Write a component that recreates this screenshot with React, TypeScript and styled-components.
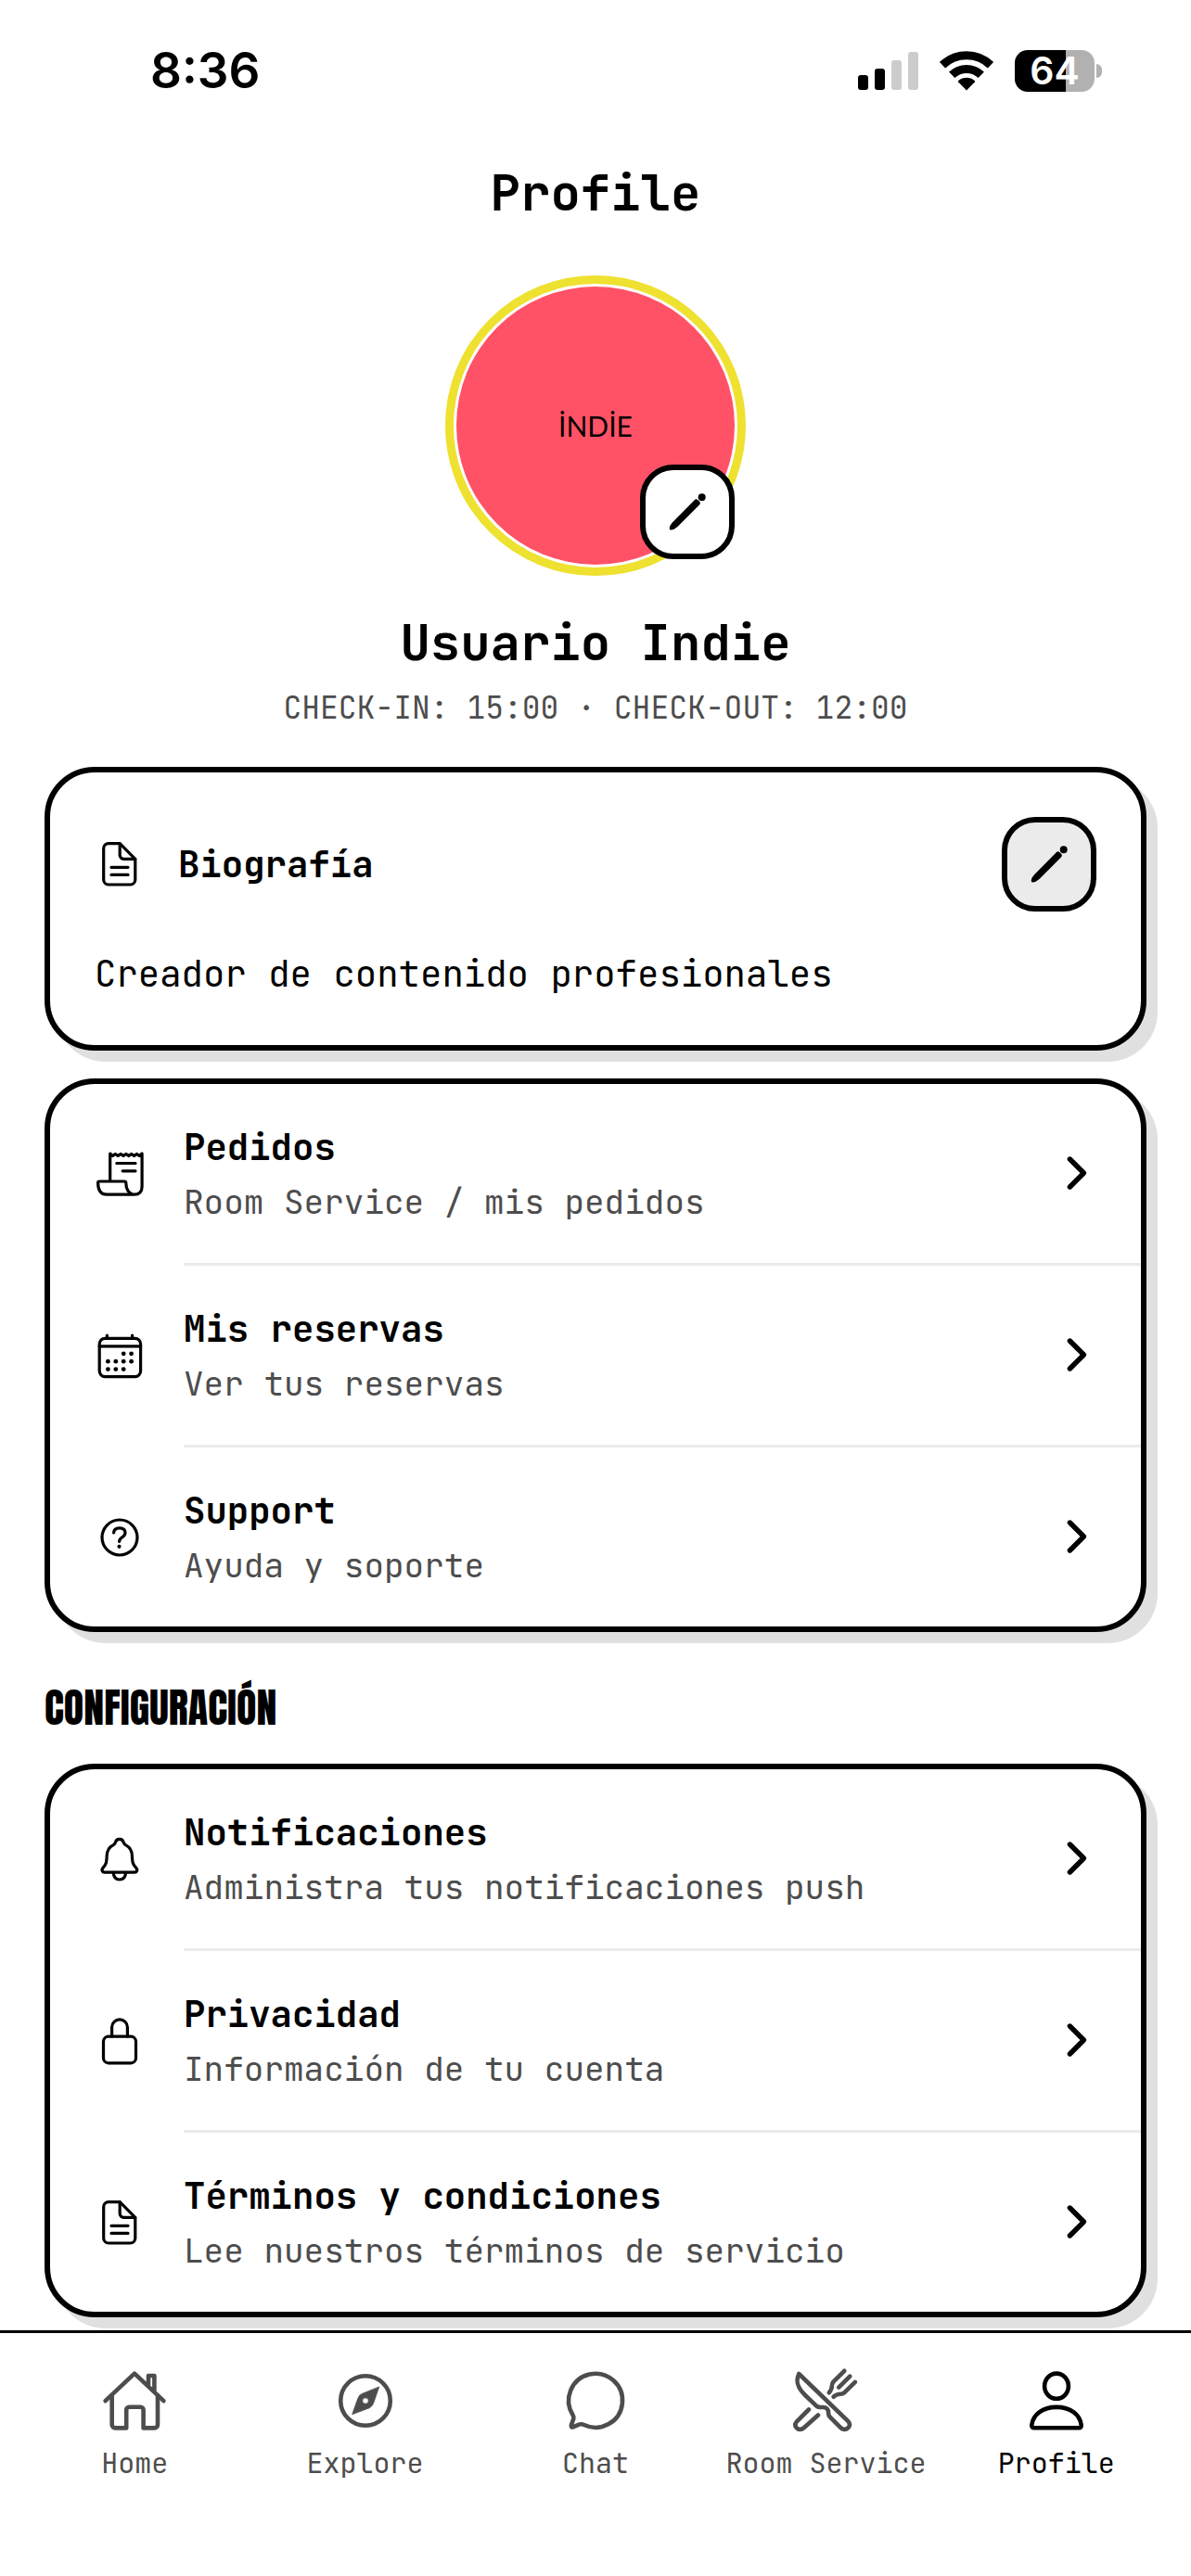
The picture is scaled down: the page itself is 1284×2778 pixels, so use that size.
import React, { useState } from 'react';
import styled, { createGlobalStyle } from 'styled-components';

const colors = {
  ink: '#000000',
  muted: '#4d4d4d',
  line: '#ebebeb',
  paper: '#ffffff',
  accent: '#ff5266',
  ring: '#eee130',
  shadow: '#e0e0e0',
  faded: '#cccccc',
  battery: '#b1b1b1',
};

const mono = "'JetBrains Mono', 'DejaVu Sans Mono', monospace";
const system = "'SF Pro Text', 'Inter', sans-serif";

const GlobalStyle = createGlobalStyle`
  *,
  *::before,
  *::after {
    box-sizing: border-box;
  }

  body {
    margin: 0;
    background-color: ${colors.paper};
    color: ${colors.ink};
    font-family: ${mono};
  }

  button {
    font-family: inherit;
    color: inherit;
    cursor: pointer;
  }
`;

const Screen = styled.div`
  display: flex;
  flex-flow: column;
  min-height: 100vh;
`;

const StatusBar = styled.div`
  display: flex;
  justify-content: space-between;
  align-items: center;
  height: 152px;
  padding: 0 96px 0 162px;
  font-family: ${system};
`;

const Clock = styled.time`
  font-size: 53px;
  line-height: 66px;
  font-weight: 600;
`;

const StatusIcons = styled.div`
  display: flex;
  align-items: center;
  gap: 23px;
`;

const Battery = styled.div`
  display: flex;
  align-items: center;
  gap: 2px;

  &::after {
    content: '';
    width: 6px;
    height: 15px;
    border-radius: 0 8px 8px 0;
    background-color: ${colors.battery};
  }
`;

const BatteryLevel = styled.div`
  display: flex;
  justify-content: center;
  align-items: center;
  width: 86px;
  height: 45px;
  border-radius: 14px;
  background: linear-gradient(
    90deg,
    ${colors.ink} 64%,
    ${colors.battery} 64%
  );
  color: ${colors.paper};
  font-size: 41px;
  line-height: 45px;
  font-weight: 600;
`;

const Main = styled.main`
  display: flex;
  flex-flow: column;
  flex: 1;
  padding: 20px 48px 14px;
`;

const Title = styled.h1`
  margin: 0;
  font-size: 54px;
  line-height: 72px;
  font-weight: bold;
  text-align: center;
`;

const Person = styled.section`
  display: flex;
  flex-flow: column;
  align-items: center;
  margin: 53px 0 40px;
`;

const Avatar = styled.div`
  position: relative;
  width: 324px;
  height: 324px;
  padding: 3px;
  border: 9px solid ${colors.ring};
  border-radius: 50%;
`;

const AvatarPicture = styled.div`
  display: flex;
  justify-content: center;
  align-items: center;
  width: 100%;
  height: 100%;
  border-radius: 50%;
  background-color: ${colors.accent};
  font-family: 'Lato', sans-serif;
  font-size: 30px;
  line-height: 36px;
`;

const EditButton = styled.button<{ $shaded?: boolean }>`
  display: flex;
  justify-content: center;
  align-items: center;
  width: 102px;
  height: 102px;
  padding: 0;
  border: 6px solid ${colors.ink};
  border-radius: 36px;
  background-color: ${({ $shaded }) => ($shaded ? colors.line : colors.paper)};
`;

const AvatarEdit = styled(EditButton)`
  position: absolute;
  right: 3px;
  bottom: 9px;
`;

const Name = styled.h2`
  margin: 36px 0 10px;
  font-size: 54px;
  line-height: 72px;
  font-weight: bold;
`;

const Stay = styled.p`
  margin: 0;
  color: ${colors.muted};
  font-size: 33px;
  line-height: 48px;
`;

const Card = styled.section`
  border: 6px solid ${colors.ink};
  border-radius: 54px;
  background-color: ${colors.paper};
  box-shadow: 12px 12px 0 ${colors.shadow};
`;

const BioCard = styled(Card)`
  margin-bottom: 30px;
  padding: 48px 48px 51px;
`;

const BioHeader = styled.div`
  display: flex;
  align-items: center;
  gap: 36px;
  margin-bottom: 41px;
`;

const BioTitle = styled.h3`
  flex: 1;
  margin: 0;
  font-size: 39px;
  line-height: 52px;
`;

const BioText = styled.p`
  margin: 0;
  font-size: 39px;
  line-height: 52px;
`;

const List = styled.ul`
  margin: 0;
  padding: 0;
  list-style: none;
`;

const Item = styled.li`
  & + &::before {
    content: '';
    display: block;
    height: 3px;
    margin-left: 144px;
    background-color: ${colors.line};
  }
`;

const Row = styled.button`
  display: flex;
  align-items: center;
  gap: 42px;
  width: 100%;
  padding: 42px 48px;
  border: none;
  background: none;
  text-align: left;
`;

const RowText = styled.span`
  display: flex;
  flex-flow: column;
  flex: 1;
  gap: 9px;
`;

const RowTitle = styled.span`
  font-size: 39px;
  line-height: 52px;
  font-weight: bold;
`;

const RowDetail = styled.span`
  color: ${colors.muted};
  font-size: 36px;
  line-height: 48px;
`;

const SectionTitle = styled.h2`
  margin: 54px 0 34px;
  font-family: 'Anton', 'Liberation Sans Narrow', sans-serif;
  font-size: 44px;
  line-height: 54px;
  font-weight: normal;
  text-transform: uppercase;
`;

const TabBar = styled.nav`
  display: grid;
  grid-template-columns: repeat(5, 1fr);
  padding: 37px 21px 101px;
  border-top: 3px solid ${colors.ink};
  background-color: ${colors.paper};
`;

const Tab = styled.a<{ $active: boolean }>`
  display: flex;
  flex-flow: column;
  align-items: center;
  gap: 10px;
  color: ${({ $active }) => ($active ? colors.ink : colors.muted)};
  font-size: 30px;
  line-height: 42px;
  text-decoration: none;
  white-space: nowrap;
`;

const Icon = styled.svg.attrs({ 'aria-hidden': true })`
  display: block;
  flex: none;
  fill: none;
  stroke: currentColor;
  stroke-linecap: round;
  stroke-linejoin: round;
`;

const RowIcon = styled(Icon).attrs({ viewBox: '0 0 54 54' })`
  width: 54px;
  height: 54px;
  stroke-width: 3.2;
`;

const TabIcon = styled(Icon).attrs({ viewBox: '0 0 72 72' })`
  width: 72px;
  height: 72px;
  stroke-width: 4.6;
`;

const SignalIcon = () => (
  <svg width="65" height="42" viewBox="0 0 65 42" aria-hidden>
    <rect x="0" y="26" width="11" height="16" rx="3" />
    <rect x="18" y="19" width="11" height="23" rx="3" />
    <rect x="36" y="10" width="11" height="32" rx="3" fill={colors.faded} />
    <rect x="54" y="1" width="11" height="41" rx="3" fill={colors.faded} />
  </svg>
);

const WifiIcon = () => (
  <svg width="58" height="43" viewBox="0 0 58 43" aria-hidden>
    <g fill="none" stroke={colors.ink} strokeWidth="9">
      <path d="M3 15.2A37.5 37.5 0 0 1 55 15.2" />
      <path d="M13.2 25.8A22.7 22.7 0 0 1 44.8 25.8" />
    </g>
    <path d="M29 42.5L20 33.2Q19.6 32.6 20.3 32A13.5 13.5 0 0 1 37.7 32Q38.4 32.6 38 33.2Z" />
  </svg>
);

const PencilIcon = () => (
  <svg width="54" height="54" viewBox="0 0 54 54" aria-hidden>
    <circle cx="42.7" cy="11.3" r="4" />
    <path d="M35 14Q36.6 12.4 38.2 14L40.3 16.1Q41.6 17.6 40.2 19.2L16.5 43Q12.8 46.4 9.4 46.4Q7.6 46.6 7.7 44.4Q7.8 41.8 10.8 38.4Z" />
  </svg>
);

const DocumentIcon = () => (
  <RowIcon>
    <path d="M27.2 4.7H15A5.3 5.3 0 0 0 9.7 10V43.7A5.3 5.3 0 0 0 15 49H38.5A5.3 5.3 0 0 0 43.8 43.7V21.3Z" />
    <path d="M27.2 4.7V17.3A4 4 0 0 0 31.2 21.3H43.8M18 30.3H36M18 38.4H36" />
  </RowIcon>
);

const ReceiptIcon = () => (
  <RowIcon>
    <path d="M16.7 35V5L19.5 7.6L22.3 5.4L25.2 7.6L28.1 5.4L31 7.6L33.9 5.4L36.8 7.6L39.7 5.4L42.6 7.6L45.5 5.4L48.3 7.6L51.1 5V40.5Q51.1 49.2 42.5 49.2H13Q3.7 49.2 3.6 36.5Q3.6 35 5.2 35H32Q33.7 35 33.8 36.7Q34 47 41.5 49.2" />
    <path d="M23.8 15.5H44M30.2 23.8H44" />
  </RowIcon>
);

const CalendarIcon = () => (
  <RowIcon>
    <rect x="5.2" y="8.4" width="44.4" height="41.2" rx="6" />
    <path d="M5.2 16.9H49.6M13.4 5V8M40.6 5V8" />
    <g fill="currentColor" stroke="none">
      <circle cx="31.2" cy="24.8" r="2.4" />
      <circle cx="39.6" cy="24.8" r="2.4" />
      <circle cx="14.4" cy="33.2" r="2.4" />
      <circle cx="22.8" cy="33.2" r="2.4" />
      <circle cx="31.2" cy="33.2" r="2.4" />
      <circle cx="39.6" cy="33.2" r="2.4" />
      <circle cx="14.4" cy="41.6" r="2.4" />
      <circle cx="22.8" cy="41.6" r="2.4" />
      <circle cx="31.2" cy="41.6" r="2.4" />
    </g>
  </RowIcon>
);

const HelpIcon = () => (
  <RowIcon>
    <circle cx="27" cy="27" r="19" />
    <path d="M20.6 22Q20.8 16.8 26.8 16.8Q33 16.8 33 22Q33 24.6 29.8 26.8Q26.6 29 26.6 31.4" />
    <circle cx="26.5" cy="36.8" r="2.1" fill="currentColor" stroke="none" />
  </RowIcon>
);

const BellIcon = () => (
  <RowIcon>
    <path d="M26.8 5.3C29.2 5.3 30.8 6.6 31.3 9.2C31.6 10.4 32.2 11 33.4 11.6C38 14 40.2 17.6 40.4 23C40.7 30.4 41 32.4 44.8 36.4Q46.2 38 45.6 39.6Q45 41.1 43 41.1H10.8Q8.8 41.1 8.2 39.6Q7.6 38 9 36.4C12.6 32.4 12.9 30.4 13.2 23C13.4 17.6 15.6 14 20.2 11.6C21.4 11 22 10.4 22.3 9.2C22.8 6.6 24.4 5.3 26.8 5.3Z" />
    <path d="M20.2 41.4Q20.6 49 26.9 49Q33.2 49 33.6 41.4" />
  </RowIcon>
);

const LockIcon = () => (
  <RowIcon>
    <rect x="9.5" y="22.2" width="35" height="28.6" rx="5.4" />
    <path d="M18.6 22V12.2A8.4 8.4 0 0 1 35.4 12.2V22" />
  </RowIcon>
);

const ChevronIcon = styled(Icon).attrs({
  viewBox: '0 0 42 42',
  children: <path d="M13.4 5L28.4 20L13.4 35" />,
})`
  width: 42px;
  height: 42px;
  stroke-width: 5.4;
`;

const HomeIcon = () => (
  <TabIcon>
    <path d="M4.6 36.2L36 6.6L67.4 36.2M51 19.5V9H57.4V26" />
    <path d="M11.7 30.5V62A3.5 3.5 0 0 0 15.2 65.4H27.2V46A3.2 3.2 0 0 1 30.4 42.8H42.4A3.2 3.2 0 0 1 45.6 46V65.4H57.6A3.5 3.5 0 0 0 61 62V30.5" />
  </TabIcon>
);

const CompassIcon = () => (
  <TabIcon>
    <circle cx="36" cy="36" r="26.8" />
    <path
      d="M50.6 21.3L44.8 38.2Q43.8 41.8 40.2 43.8L21.7 50.7L27.8 33.4Q29.2 29.6 32.2 28.4ZM36 32.7A3.3 3.3 0 1 0 36 39.3A3.3 3.3 0 1 0 36 32.7Z"
      fill="currentColor"
      fillRule="evenodd"
      strokeWidth="0.8"
    />
  </TabIcon>
);

const ChatIcon = () => (
  <TabIcon>
    <path d="M11.6 51.4A29 29 0 1 1 23.6 62Q21 60.8 18.2 61.6L11.8 64.4Q9.4 65 9.8 62.6L12.3 55.6Q12.9 53.4 11.6 51.4Z" />
  </TabIcon>
);

const CutleryIcon = () => (
  <TabIcon>
    <path d="M7.3 7L60.6 58.4Q63.4 61.6 60.6 65Q56.6 68.6 52.6 65.4L40.6 53.4Q39.2 52 39.2 49.8C39.2 45 37 42.6 32 43Q28.4 43.4 26.2 41.6L14 30C5.6 21.8 3.4 15 7.3 7Z" />
    <path d="M17.9 45.5L4.8 58.6Q1.8 62.2 5 65.4Q8.8 68.6 12.6 65.2L28 51.5" />
    <path d="M56.3 3.8L44.6 15.4Q42.9 17.2 42.9 19.6Q43 23.6 39.8 27.2" />
    <path d="M62.3 9.6L50.2 21.6M67.9 15.9L56.4 27.2Q54.8 28.8 52.2 28.8Q47.8 28.8 44.6 31.8" />
  </TabIcon>
);

const PersonIcon = () => (
  <TabIcon>
    <ellipse cx="36" cy="20.2" rx="12.9" ry="13.6" />
    <path d="M11.8 65.2Q9 65.2 9.3 62.2C10.8 50.4 21.4 42.9 36 42.9S61.2 50.4 62.7 62.2Q63 65.2 60.2 65.2Z" />
  </TabIcon>
);

interface Entry {
  title: string;
  detail: string;
  icon: React.FC;
}

const activity: Entry[] = [
  {
    title: 'Pedidos',
    detail: 'Room Service / mis pedidos',
    icon: ReceiptIcon,
  },
  { title: 'Mis reservas', detail: 'Ver tus reservas', icon: CalendarIcon },
  { title: 'Support', detail: 'Ayuda y soporte', icon: HelpIcon },
];

const settings: Entry[] = [
  {
    title: 'Notificaciones',
    detail: 'Administra tus notificaciones push',
    icon: BellIcon,
  },
  { title: 'Privacidad', detail: 'Información de tu cuenta', icon: LockIcon },
  {
    title: 'Términos y condiciones',
    detail: 'Lee nuestros términos de servicio',
    icon: DocumentIcon,
  },
];

const tabs = [
  { label: 'Home', icon: HomeIcon },
  { label: 'Explore', icon: CompassIcon },
  { label: 'Chat', icon: ChatIcon },
  { label: 'Room Service', icon: CutleryIcon },
  { label: 'Profile', icon: PersonIcon },
];

const Menu: React.FC<{ entries: Entry[] }> = ({ entries }) => (
  <Card>
    <List>
      {entries.map(({ title, detail, icon: EntryIcon }) => (
        <Item key={title}>
          <Row type="button">
            <EntryIcon />
            <RowText>
              <RowTitle>{title}</RowTitle>
              <RowDetail>{detail}</RowDetail>
            </RowText>
            <ChevronIcon />
          </Row>
        </Item>
      ))}
    </List>
  </Card>
);

const App: React.FC = () => {
  const [activeTab, setActiveTab] = useState('Profile');

  return (
    <Screen>
      <GlobalStyle />
      <StatusBar>
        <Clock>8:36</Clock>
        <StatusIcons>
          <SignalIcon />
          <WifiIcon />
          <Battery>
            <BatteryLevel>64</BatteryLevel>
          </Battery>
        </StatusIcons>
      </StatusBar>
      <Main>
        <Title>Profile</Title>
        <Person>
          <Avatar>
            <AvatarPicture>İNDİE</AvatarPicture>
            <AvatarEdit type="button" aria-label="Editar foto">
              <PencilIcon />
            </AvatarEdit>
          </Avatar>
          <Name>Usuario Indie</Name>
          <Stay>CHECK-IN: 15:00 · CHECK-OUT: 12:00</Stay>
        </Person>
        <BioCard>
          <BioHeader>
            <DocumentIcon />
            <BioTitle>Biografía</BioTitle>
            <EditButton type="button" $shaded aria-label="Editar biografía">
              <PencilIcon />
            </EditButton>
          </BioHeader>
          <BioText>Creador de contenido profesionales</BioText>
        </BioCard>
        <Menu entries={activity} />
        <SectionTitle>Configuración</SectionTitle>
        <Menu entries={settings} />
      </Main>
      <TabBar>
        {tabs.map(({ label, icon: LabelIcon }) => (
          <Tab
            key={label}
            href="#"
            $active={activeTab === label}
            onClick={() => setActiveTab(label)}
          >
            <LabelIcon />
            {label}
          </Tab>
        ))}
      </TabBar>
    </Screen>
  );
};

export default App;
